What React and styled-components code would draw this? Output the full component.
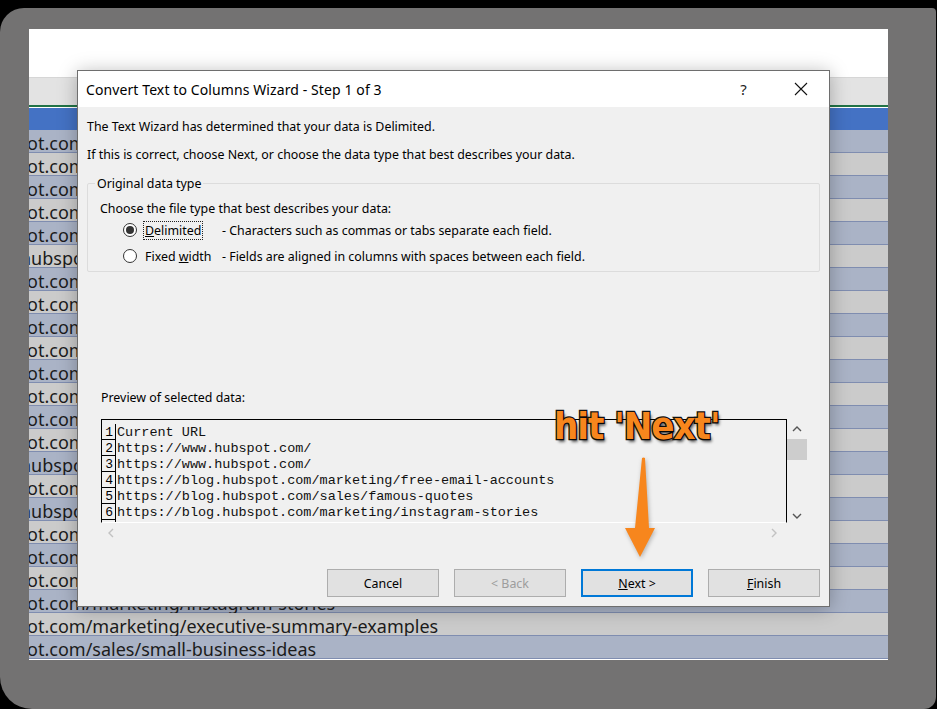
import React from "react";
import styled, {createGlobalStyle} from "styled-components";

const GlobalStyle = createGlobalStyle`
  html, body {
    margin: 0;
    padding: 0;
    background: #000;
  }
  body {
    width: 937px;
    height: 709px;
    overflow: hidden;
    font-family: "Noto Sans", "Open Sans", sans-serif;
  }
`;

const Frame = styled.div`
  margin-top: 8px;
  width: 936px;
  height: 701px;
  box-sizing: border-box;
  padding: 21px 48px 0 29px;
  background: #737272;
  border-radius: 24px 4px 12px 32px;
`;

const Sheet = styled.div`
  position: relative;
  width: 859px;
  height: 631px;
  background: #fff;
  overflow: hidden;
  display: flex;
  flex-direction: column;
`;

const Ribbon = styled.div`
  height: 48px;
  background: #fff;
  border-bottom: 1px solid #d6d6d6;
`;

const FormulaBar = styled.div`
  height: 27px;
  background: #e3e3e3;
  border-bottom: 2px solid #217346;
`;

const HeaderRow = styled.div`
  height: 22px;
  border-top: 1px solid #fff;
  background: #4472c4;
`;

const DataRow = styled.div`
  height: 22px;
  box-sizing: border-box;
  height: 23px;
  padding-top: 3px;
  border-bottom: 1px solid #7f8db0;
  background: ${p => (p.$alt ? "#cbcbcb" : "#aab3c6")};
  display: flex;
  align-items: center;
  font-family: "Noto Sans", sans-serif;
  font-size: 18px;
  color: #1c1c1c;
  white-space: nowrap;
`;

const Clip = styled.span`
  margin-left: ${p => p.$shift}px;
`;

const Dialog = styled.div`
  position: absolute;
  left: 48px;
  top: 41px;
  width: 753px;
  height: 537px;
  box-sizing: border-box;
  border: 1px solid #6e6e6e;
  background: #f0f0f0;
  box-shadow: 0 2px 18px rgba(0, 0, 0, 0.28);
  display: flex;
  flex-direction: column;
  font-family: "Noto Sans", "Open Sans", sans-serif;
  font-size: 12.4px;
  color: #000;
`;

const TitleBar = styled.div`
  height: 36px;
  background: #fff;
  display: flex;
  align-items: center;
  padding-left: 8px;
`;

const Title = styled.div`
  flex: 1;
  font-size: 14px;
  letter-spacing: 0.1px;
`;

const TitleButton = styled.div`
  width: 57px;
  height: 36px;
  display: flex;
  align-items: center;
  justify-content: center;
  font-size: 15px;
  color: #222;
`;

const Body = styled.div`
  flex: 1;
  display: flex;
  flex-direction: column;
  padding: 0 9px 0 9px;
`;

const Line = styled.div`
  height: 16px;
  line-height: 16px;
  margin-top: ${p => p.$top || 0}px;
  padding-left: ${p => p.$indent || 0}px;
  white-space: nowrap;
`;

const Group = styled.fieldset`
  margin: 12px 0 0 0;
  padding: 0 0 0 12px;
  height: 97px;
  box-sizing: border-box;
  border: 1px solid #dcdcdc;
  border-radius: 2px;
`;

const Legend = styled.legend`
  padding: 0 2px;
  margin-left: -5px;
  font-size: 12.4px;
`;

const RadioRow = styled.div`
  display: flex;
  align-items: center;
  height: 26px;
  padding-left: 23px;
  white-space: nowrap;
`;

const Radio = styled.span`
  width: 14px;
  height: 14px;
  box-sizing: border-box;
  border-radius: 50%;
  border: 1px solid #333;
  background: #fff;
  display: flex;
  align-items: center;
  justify-content: center;
  margin-right: 7px;
  &::after {
    content: "";
    width: 8px;
    height: 8px;
    border-radius: 50%;
    background: ${p => (p.$checked ? "#333" : "transparent")};
  }
`;

const RadioLabel = styled.span`
  width: 78px;
  span {
    padding: 0 1px;
    outline: ${p => (p.$focus ? "1px dotted #222" : "none")};
  }
  u {
    text-decoration: underline;
  }
`;

const PreviewWrap = styled.div`
  margin: 13px 0 0 14px;
  display: grid;
  grid-template-columns: 686px 20px;
  grid-template-rows: 104px 20px;
`;

const PreviewBox = styled.div`
  border: 1px solid #000;
  border-bottom: 1px solid #fff;
  padding-top: 4px;
  display: flex;
  flex-direction: column;
  overflow: hidden;
  font-family: "Liberation Mono", "Courier New", monospace;
  font-size: 13.5px;
`;

const PreviewRow = styled.div`
  display: flex;
  flex: none;
  height: 16px;
  line-height: 17px;
`;

const Num = styled.span`
  width: 14px;
  box-sizing: border-box;
  border-right: 1px solid #000;
  border-bottom: 1px solid #000;
  text-align: right;
  padding-right: 2px;
  font-size: 13px;
  line-height: 17px;
  margin-right: 1px;
`;

const Code = styled.span`
  white-space: pre;
  color: #111;
`;

const VScroll = styled.div`
  display: flex;
  flex-direction: column;
  align-items: center;
  padding-top: 4px;
`;

const Thumb = styled.div`
  width: 20px;
  height: 21px;
  margin-top: 2px;
  background: #cdcdcd;
`;

const Spacer = styled.div`
  flex: 1;
`;

const HScroll = styled.div`
  display: flex;
  align-items: center;
  justify-content: space-between;
  padding: 0 6px 0 4px;
`;

const Buttons = styled.div`
  margin-top: auto;
  margin-bottom: 9px;
  display: flex;
  justify-content: flex-end;
  gap: 15px;
`;

const Button = styled.div`
  width: 112px;
  height: 28px;
  box-sizing: border-box;
  background: #e1e1e1;
  border: ${p => (p.$focus ? "2px solid #0078d7" : "1px solid #adadad")};
  display: flex;
  align-items: center;
  justify-content: center;
  color: ${p => (p.$disabled ? "#9d9d9d" : "#000")};
  font-size: 12.4px;
`;

const Callout = styled.div`
  position: absolute;
  left: 525px;
  top: 375px;
  font-family: "Liberation Sans Narrow", "DejaVu Sans Condensed", "Liberation Sans", sans-serif;
  font-weight: bold;
  font-size: 38px;
  letter-spacing: -1px;
  color: #f7861d;
  -webkit-text-stroke: 2.5px #111;
  paint-order: stroke fill;
  text-shadow: 2px 3px 3px rgba(0, 0, 0, 0.6);
  white-space: nowrap;
`;

const ArrowSvg = styled.svg`
  position: absolute;
  left: 591px;
  top: 426px;
  filter: drop-shadow(1px 2px 2px rgba(0, 0, 0, 0.25));
`;

const rowTexts = [
  ["pot.com", -13], ["pot.com", -13], ["pot.com", -13], ["pot.com", -13], ["pot.com", -13],
  ["hubspot", -9], ["pot.com", -13], ["pot.com", -13], ["pot.com", -13], ["pot.com", -13],
  ["pot.com", -13], ["pot.com", -13], ["pot.com", -13], ["pot.com", -13], ["hubspot", -9],
  ["pot.com", -13], ["hubspot", -9], ["pot.com", -13], ["pot.com", -13], ["pot.com", -13],
  ["pot.com/marketing/instagram-stories", -13],
  ["pot.com/marketing/executive-summary-examples", -13],
  ["pot.com/sales/small-business-ideas", -13],
];

const preview = [
  "Current URL",
  "https://www.hubspot.com/",
  "https://www.hubspot.com/",
  "https://blog.hubspot.com/marketing/free-email-accounts",
  "https://blog.hubspot.com/sales/famous-quotes",
  "https://blog.hubspot.com/marketing/instagram-stories",
  "",
];

const Chevron = ({dir, color = "#555"}) => {
  const paths = {
    up: "M3 8 L7 4 L11 8",
    down: "M3 5 L7 9 L11 5",
    left: "M8 3 L4 7 L8 11",
    right: "M5 3 L9 7 L5 11",
  };
  return (
    <svg width="14" height="14" viewBox="0 0 14 14">
      <path d={paths[dir]} fill="none" stroke={color} strokeWidth="1.4"/>
    </svg>
  );
};

export default function App() {
  return (
    <>
      <GlobalStyle/>
      <Frame>
        <Sheet>
          <Ribbon/>
          <FormulaBar/>
          <HeaderRow/>
          {rowTexts.map(([text, shift], i) => (
            <DataRow key={i} $alt={i % 2 === 1}>
              <Clip $shift={shift}>{text}</Clip>
            </DataRow>
          ))}

          <Dialog>
            <TitleBar>
              <Title>Convert Text to Columns Wizard - Step 1 of 3</Title>
              <TitleButton>?</TitleButton>
              <TitleButton>
                <svg width="14" height="14" viewBox="0 0 14 14">
                  <path d="M1 1 L13 13 M13 1 L1 13" stroke="#111" strokeWidth="1.1"/>
                </svg>
              </TitleButton>
            </TitleBar>
            <Body>
              <Line $top={12}>The Text Wizard has determined that your data is Delimited.</Line>
              <Line $top={12}>If this is correct, choose Next, or choose the data type that best describes your data.</Line>
              <Group>
                <Legend>Original data type</Legend>
                <Line $top={9}>Choose the file type that best describes your data:</Line>
                <RadioRow>
                  <Radio $checked/>
                  <RadioLabel $focus><span><u>D</u>elimited</span></RadioLabel>
                  <span>- Characters such as commas or tabs separate each field.</span>
                </RadioRow>
                <RadioRow>
                  <Radio/>
                  <RadioLabel><span>Fixed <u>w</u>idth</span></RadioLabel>
                  <span>- Fields are aligned in columns with spaces between each field.</span>
                </RadioRow>
              </Group>
              <Line $top={118} $indent={14}>Preview of selected data:</Line>
              <PreviewWrap>
                <PreviewBox>
                  {preview.map((t, i) => (
                    <PreviewRow key={i}>
                      <Num>{i < 6 ? i + 1 : ""}</Num>
                      <Code>{t}</Code>
                    </PreviewRow>
                  ))}
                </PreviewBox>
                <VScroll>
                  <Chevron dir="up"/>
                  <Thumb/>
                  <Spacer/>
                  <Chevron dir="down"/>
                </VScroll>
                <HScroll>
                  <Chevron dir="left" color="#c2c2c2"/>
                  <Chevron dir="right" color="#c2c2c2"/>
                </HScroll>
              </PreviewWrap>
              <Buttons>
                <Button>Cancel</Button>
                <Button $disabled>&lt; Back</Button>
                <Button $focus><u>N</u>ext &gt;</Button>
                <Button><u>F</u>inish</Button>
              </Buttons>
            </Body>
          </Dialog>

          <Callout>hit 'Next'</Callout>
          <ArrowSvg width="40" height="104" viewBox="0 0 40 104">
            <path d="M22 3 Q23.5 2 25 3 L29 73 L35 73 L20 102 L5 73 L15 73 Z" fill="#f7861d"/>
          </ArrowSvg>
        </Sheet>
      </Frame>
    </>
  );
}
